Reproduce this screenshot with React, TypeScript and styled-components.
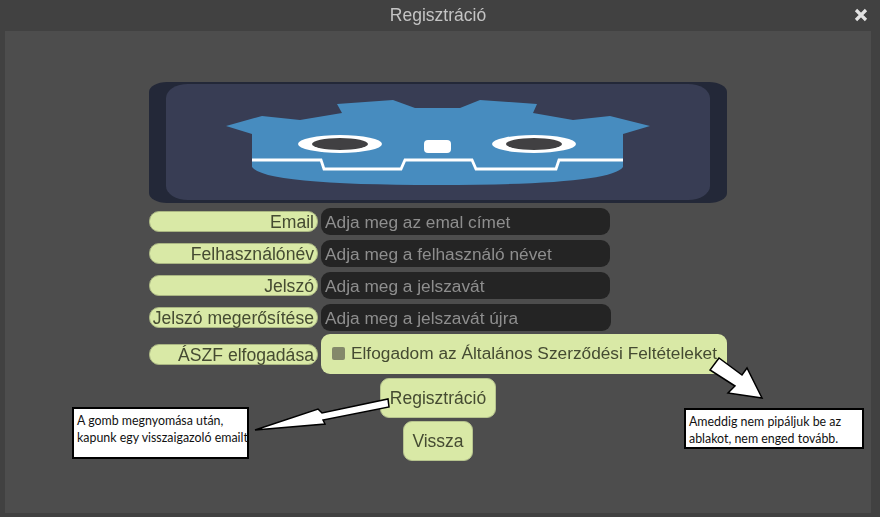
import React from 'react';
import styled, { createGlobalStyle } from 'styled-components';

const GlobalStyle = createGlobalStyle`
  html, body {
    margin: 0;
    padding: 0;
    background: #414141;
    overflow: hidden;
  }
`;

const Window = styled.div`
  position: relative;
  width: 880px;
  height: 517px;
  display: flex;
  flex-direction: column;
  background: #414141;
  font-family: "Liberation Sans", Arial, sans-serif;
`;

const TitleBar = styled.div`
  height: 31px;
  flex-shrink: 0;
  display: flex;
  align-items: center;
  justify-content: center;
  padding-right: 4px;
  font-size: 17.5px;
  color: #c4c4c4;
  filter: blur(0.5px);
`;

const CloseIcon = styled.svg`
  position: absolute;
  top: 8px;
  right: 12px;
  width: 14px;
  height: 14px;
`;

const Panel = styled.main`
  flex: 1;
  margin: 0 9px 4px 5px;
  padding-top: 51px;
  background: #4d4d4d;
  display: flex;
  flex-direction: column;
  align-items: center;
`;

const Logo = styled.svg`
  display: block;
  width: 578px;
  height: 122px;
  filter: blur(0.6px);
`;

const Form = styled.div`
  margin-top: 4px;
  display: flex;
  flex-direction: column;
  gap: 3px;
  width: 578px;
  filter: blur(0.55px);
`;

const Fields = styled.div`
  display: flex;
  flex-direction: column;
  gap: 5px;
`;

const Row = styled.div`
  display: flex;
  align-items: center;
  gap: 3px;
`;

const Label = styled.label`
  box-sizing: border-box;
  width: 169px;
  height: 21px;
  flex-shrink: 0;
  padding-right: 3px;
  border: 1px solid #a9b582;
  border-radius: 10px;
  background: #d9e9a6;
  color: #454b32;
  font-size: 17.6px;
  line-height: 20px;
  text-align: right;
  white-space: nowrap;
`;

const TextInput = styled.div<{ $wide?: boolean }>`
  box-sizing: border-box;
  width: ${(props) => (props.$wide ? 290 : 289)}px;
  height: 27px;
  padding-left: 4px;
  border-radius: 9px;
  background: #242424;
  color: #8e8e8e;
  font-size: 17.3px;
  line-height: 29px;
  white-space: nowrap;
`;

const CheckBar = styled.div`
  box-sizing: border-box;
  width: 406px;
  height: 40px;
  display: flex;
  align-items: center;
  gap: 6px;
  padding: 0 0 1px 11px;
  border-radius: 9px;
  background: #d9e9a6;
  color: #454b32;
  font-size: 17.3px;
  white-space: nowrap;
`;

const CheckMark = styled.span`
  width: 13px;
  height: 13px;
  flex-shrink: 0;
  border-radius: 2px;
  background: #83886a;
`;

const Actions = styled.div`
  display: flex;
  flex-direction: column;
  align-items: center;
  gap: 3px;
  margin-top: 1px;
`;

const ActionButton = styled.button<{ $width: number }>`
  width: ${(props) => props.$width}px;
  height: 40px;
  padding: 0;
  border: 1px solid #b6c38e;
  border-radius: 9px;
  background: #d9e9a6;
  color: #454b32;
  font-family: inherit;
  font-size: 17.5px;
`;

const Callout = styled.div<{ $left: number; $top: number; $width: number; $height: number }>`
  position: absolute;
  left: ${(props) => props.$left}px;
  top: ${(props) => props.$top}px;
  box-sizing: border-box;
  width: ${(props) => props.$width}px;
  height: ${(props) => props.$height}px;
  padding: 3px 0 0 3px;
  border: 2px solid #000;
  background: #fff;
  color: #111;
  font-family: Lato, "Open Sans", sans-serif;
  font-size: 12.4px;
  line-height: 17px;
  white-space: pre;
`;

const ArrowLayer = styled.svg`
  position: absolute;
  left: 0;
  top: 0;
  width: 880px;
  height: 517px;
  pointer-events: none;
`;

const GodotLogo: React.FC = () => (
  <Logo viewBox="0 0 578 122">
    <rect x="0" y="0" width="578" height="121" rx="18" ry="10" fill="#232838" />
    <rect x="17" y="2" width="544" height="116" rx="22" ry="14" fill="#383d54" />
    <path
      d="M77 44 L113 34 L151 38 L193 31 L188 22 L244 18 L266 26 L311 26 L331 18 L388 22 L384 31 L424 38 L461 34 L501 44 L474 52 L474 85 Q462 103 288 103 Q115 103 103 85 L103 52 Z"
      fill="#478cbf"
    />
    <polyline
      points="103,78 172,78 175,87 252,87 256,78 323,78 327,87 407,87 410,78 474,78"
      fill="none"
      stroke="#fff"
      strokeWidth="2.8"
    />
    <ellipse cx="191" cy="62" rx="42" ry="9" fill="#fff" />
    <ellipse cx="191" cy="62" rx="28" ry="6" fill="#414042" />
    <ellipse cx="385" cy="62" rx="42" ry="9" fill="#fff" />
    <ellipse cx="385" cy="62" rx="28" ry="6" fill="#414042" />
    <rect x="275" y="58" width="27" height="13" rx="4" fill="#fff" />
  </Logo>
);

export default function App() {
  return (
    <Window>
      <GlobalStyle />
      <TitleBar>Regisztráció</TitleBar>
      <CloseIcon viewBox="0 0 14 14">
        <path d="M2 2 L12 12 M12 2 L2 12" stroke="#e2e2e2" strokeWidth="3.2" fill="none" />
      </CloseIcon>
      <Panel>
        <GodotLogo />
        <Form>
          <Fields>
            <Row>
              <Label>Email</Label>
              <TextInput>Adja meg az emal címet</TextInput>
            </Row>
            <Row>
              <Label>Felhasználónév</Label>
              <TextInput>Adja meg a felhasználó névet</TextInput>
            </Row>
            <Row>
              <Label>Jelszó</Label>
              <TextInput>Adja meg a jelszavát</TextInput>
            </Row>
            <Row>
              <Label>Jelszó megerősítése</Label>
              <TextInput $wide>Adja meg a jelszavát újra</TextInput>
            </Row>
          </Fields>
          <Row>
            <Label>ÁSZF elfogadása</Label>
            <CheckBar>
              <CheckMark />
              Elfogadom az Általános Szerződési Feltételeket
            </CheckBar>
          </Row>
          <Actions>
            <ActionButton $width={116}>Regisztráció</ActionButton>
            <ActionButton $width={70}>Vissza</ActionButton>
          </Actions>
        </Form>
      </Panel>
      <Callout $left={72} $top={407} $width={177} $height={52}>
        {'A gomb megnyomása után,\nkapunk egy visszaigazoló emailt'}
      </Callout>
      <Callout $left={684} $top={408} $width={180} $height={41}>
        {'Ameddig nem pipáljuk be az\nablakot, nem enged tovább.'}
      </Callout>
      <ArrowLayer viewBox="0 0 880 517">
        <polygon
          points="255,430 318,409 322,413 388,399 389,407 323,420 325,424"
          fill="#fff"
          stroke="#000"
          strokeWidth="1.5"
        />
        <polygon
          points="719,358 710,370 735,386 728,393 762,398 747,368 742,375"
          fill="#fff"
          stroke="#000"
          strokeWidth="1.5"
        />
      </ArrowLayer>
    </Window>
  );
}
